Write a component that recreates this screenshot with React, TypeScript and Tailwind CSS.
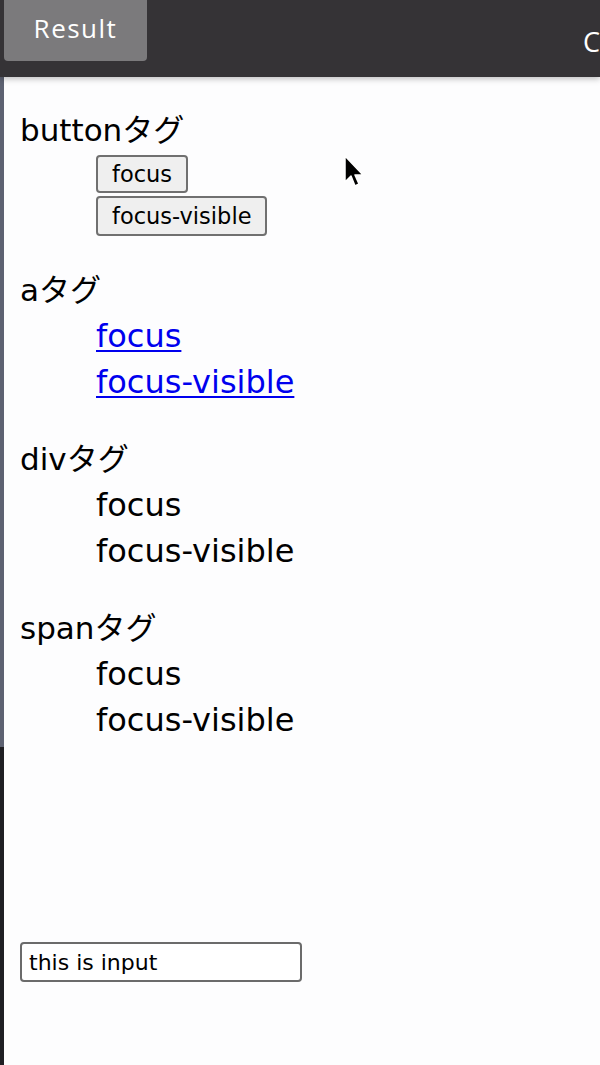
export default function App() {
  const sans = "font-['DejaVu_Sans','Noto_Sans_CJK_JP',sans-serif]";

  return (
    <div className="relative w-[600px] h-[1065px] overflow-hidden bg-[#fdfdfe]">
      {/* header bar */}
      <header className="relative z-10 flex items-start h-[77px] bg-[#353336] shadow-[0_2px_6px_rgba(0,0,0,0.25)] overflow-hidden">
        <div className="ml-[4px] flex-none w-[143px] h-[61px] pb-[4px] rounded-b-[4px] bg-[#7b7a7c] flex items-center justify-center font-['Open_Sans',sans-serif] text-[26px] tracking-[1.5px] text-white">
          Result
        </div>
        <span className="ml-[436px] mt-[24px] flex-none whitespace-nowrap font-['Open_Sans',sans-serif] text-[27px] leading-[36px] text-white">
          Console
        </span>
      </header>

      <div className="flex h-[988px]">
        {/* left edge strip */}
        <div className="flex flex-col w-[4px] flex-none">
          <div className="h-[670px] bg-[#5d6272]" />
          <div className="flex-1 bg-[#1f1f23]" />
        </div>

        <main className={`flex-1 pl-[16px] pt-[30px] text-black ${sans}`}>
          <section className="mb-[31px]">
            <div className="text-[31px] leading-[46px]">buttonタグ</div>
            <div className="pl-[76px]">
              <button className="block mt-[2px] h-[38px] px-[14px] rounded-[4px] border-2 border-[#707070] bg-[#efefef] text-[22.5px] leading-none">
                focus
              </button>
              <button className="block mt-[3px] h-[40px] px-[14px] rounded-[4px] border-2 border-[#707070] bg-[#efefef] text-[22.5px] leading-none">
                focus-visible
              </button>
            </div>
          </section>

          <section className="mb-[31px]">
            <div className="text-[31px] leading-[46px]">aタグ</div>
            <div className="pl-[76px] text-[32px] leading-[46px]">
              <div>
                <a href="#" className="text-[#0000ee] underline decoration-2 underline-offset-[3px]">focus</a>
              </div>
              <div>
                <a href="#" className="text-[#0000ee] underline decoration-2 underline-offset-[3px]">focus-visible</a>
              </div>
            </div>
          </section>

          <section className="mb-[31px]">
            <div className="text-[31px] leading-[46px]">divタグ</div>
            <div className="pl-[76px] text-[32px] leading-[46px]">
              <div>focus</div>
              <div>focus-visible</div>
            </div>
          </section>

          <section>
            <div className="text-[31px] leading-[46px]">spanタグ</div>
            <div className="pl-[76px] text-[32px] leading-[46px]">
              <div><span>focus</span></div>
              <div><span>focus-visible</span></div>
            </div>
          </section>

          <input
            readOnly
            value="this is input"
            className="block mt-[199px] w-[282px] h-[40px] px-[7px] rounded-[4px] border-2 border-[#6b6b6b] bg-white text-[22px] text-black outline-none"
          />
        </main>
      </div>

      {/* mouse cursor */}
      <svg
        className="absolute left-[343px] top-[155px] z-20"
        width="22"
        height="34"
        viewBox="0 0 22 34"
      >
        <path
          d="M2 1 L2 27 L8 21 L12 31 L16 29 L12 20 L20 20 Z"
          fill="#000"
          stroke="#fff"
          strokeWidth="1.5"
          strokeLinejoin="round"
        />
      </svg>
    </div>
  );
}
